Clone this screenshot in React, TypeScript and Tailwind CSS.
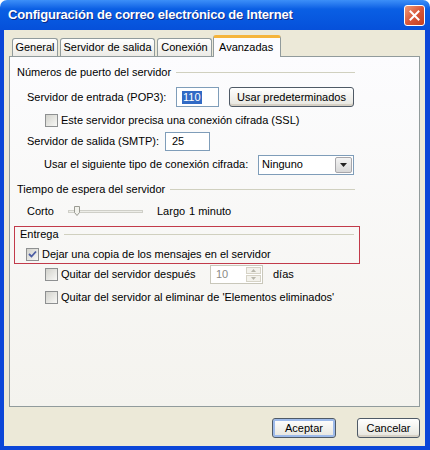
import React from 'react';

const font = "font-['Liberation_Sans',Arial,sans-serif]";

function CheckBox({ checked = false }: { checked?: boolean }) {
  return (
    <span className="w-[13px] h-[13px] shrink-0 border border-[#8E9091] bg-gradient-to-br from-[#D2D2CC] to-[#F8F8F6] flex items-center justify-center">
      {checked && (
        <svg width="9" height="9" viewBox="0 0 9 9">
          <path d="M1 4 L3.5 6.5 L8 1.5" fill="none" stroke="#4B5CA3" strokeWidth="1.8" />
        </svg>
      )}
    </span>
  );
}

function GroupHeader({ title }: { title: string }) {
  return (
    <div className="h-[14px] flex items-center pl-[3px] pr-[5px]">
      <span>{title}</span>
      <span className="flex-1 ml-[5px] h-px bg-[#D0D0BF]" />
    </div>
  );
}

function XpButton({ label, width, isDefault = false }: { label: string; width: string; isDefault?: boolean }) {
  return (
    <div
      className={`${width} h-[20px] rounded-[3px] border border-[#4F5A66] bg-gradient-to-b from-white to-[#E6E5DE] flex items-center justify-center ${
        isDefault ? 'shadow-[inset_0_0_0_2px_#9DBAEA]' : 'shadow-[inset_0_-2px_0_#D6D0C5]'
      }`}
    >
      {label}
    </div>
  );
}

function Tab({ label, width, selected = false }: { label: string; width: string; selected?: boolean }) {
  if (selected) {
    return (
      <div
        className={`${width} h-[22px] -mb-px -mx-[1px] relative z-10 rounded-t-[3px] border-x border-[#919B9C] border-t-[3px] border-t-[#F5B43B] bg-[#FCFCFE] flex items-center pl-[5px] pb-[1px]`}
      >
        {label}
      </div>
    );
  }
  return (
    <div
      className={`${width} h-[18px] rounded-t-[3px] border border-b-0 border-[#919B9C] bg-gradient-to-b from-white to-[#ECEBE6] flex items-center justify-center`}
    >
      {label}
    </div>
  );
}

export default function App() {
  return (
    <div className={`w-[430px] h-[450px] flex flex-col text-[11px] text-black ${font}`}>
      {/* Title bar */}
      <div className="h-[30px] shrink-0 rounded-t-[7px] bg-gradient-to-b from-[#3C8FF8] via-[#0A5FE4] via-30% to-[#0650DA] flex items-center pl-[8px] pr-[5px]">
        <span className="flex-1 text-white font-bold text-[13px] tracking-[-0.2px] [text-shadow:1px_1px_0_#0A2A8A]">
          Configuración de correo electrónico de Internet
        </span>
        <div className="w-[21px] h-[21px] rounded-[3px] border border-white bg-gradient-to-br from-[#EE9A78] via-[#D8573A] to-[#C2401F] flex items-center justify-center">
          <svg width="11" height="11" viewBox="0 0 11 11">
            <path d="M1.5 1.5 L9.5 9.5 M9.5 1.5 L1.5 9.5" stroke="white" strokeWidth="2" strokeLinecap="square" />
          </svg>
        </div>
      </div>

      {/* Window body */}
      <div className="flex-1 flex flex-col bg-[#ECE9D8] border-l-4 border-r-[5px] border-b-4 border-[#0B46D8] pl-[5px] pr-[5px]">
        {/* Tabs */}
        <div className="h-[26px] flex items-end pl-[3px] gap-[2px]">
          <Tab label="General" width="w-[46px]" />
          <Tab label="Servidor de salida" width="w-[95px]" />
          <Tab label="Conexión" width="w-[55px]" />
          <Tab label="Avanzadas" width="w-[68px]" selected />
        </div>

        {/* Tab page */}
        <div className="h-[351px] border border-[#919B9C] bg-gradient-to-b from-[#FCFCFE] to-[#F4F3EE] pl-[4px] pt-[8px]">
          <div className="w-[346px] flex flex-col">
            <GroupHeader title="Números de puerto del servidor" />

            <div className="mt-[8px] h-[20px] flex items-center pl-[13px]">
              <span className="w-[149px]">Servidor de entrada (POP3):</span>
              <div className="w-[43px] h-[20px] border border-[#7F9DB9] bg-white flex items-center pl-[5px]">
                <span className="bg-[#316AC5] text-white px-[1px] leading-[13px]">110</span>
              </div>
              <div className="ml-[10px]">
                <XpButton label="Usar predeterminados" width="w-[125px]" />
              </div>
            </div>

            <div className="mt-[6px] h-[14px] flex items-center pl-[31px] gap-[3px]">
              <CheckBox />
              <span>Este servidor precisa una conexión cifrada (SSL)</span>
            </div>

            <div className="mt-[5px] h-[19px] flex items-center pl-[13px]">
              <span className="w-[138px]">Servidor de salida (SMTP):</span>
              <div className="w-[45px] h-[19px] border border-[#7F9DB9] bg-white flex items-center pl-[6px]">25</div>
            </div>

            <div className="mt-[4px] h-[19px] flex items-center pl-[30px]">
              <span className="w-[214px]">Usar el siguiente tipo de conexión cifrada:</span>
              <div className="w-[96px] h-[20px] border border-[#7F9DB9] bg-white flex items-center pl-[3px] pr-[1px]">
                <span className="flex-1">Ninguno</span>
                <div className="w-[17px] h-[16px] border border-[#A7A6AA] rounded-[2px] bg-gradient-to-b from-[#F4F4F4] to-[#D8D8D8] flex items-center justify-center">
                  <svg width="7" height="4" viewBox="0 0 7 4">
                    <path d="M0 0 H7 L3.5 4 Z" fill="#222" />
                  </svg>
                </div>
              </div>
            </div>

            <div className="mt-[8px]">
              <GroupHeader title="Tiempo de espera del servidor" />
            </div>

            <div className="mt-[8px] h-[14px] flex items-center pl-[13px]">
              <span className="w-[41px]">Corto</span>
              <div className="w-[75px] h-[14px] relative flex items-center">
                <span className="w-full h-[3px] border border-[#CFCFC8] bg-[#EDEDE8]" />
                <svg className="absolute left-[6px] top-[2px]" width="6" height="10" viewBox="0 0 6 10">
                  <path d="M0.5 0.5 H5.5 V6.5 L3 9.5 L0.5 6.5 Z" fill="#F2F2EC" stroke="#9A9A93" />
                </svg>
              </div>
              <span className="ml-[14px] w-[32px]">Largo</span>
              <span>1 minuto</span>
            </div>

            {/* Delivery group */}
            <div className="mt-[8px] w-[346px] border border-[#C23A4A] flex flex-col">
              <div className="pl-[2px]">
                <GroupHeader title="Entrega" />
              </div>
              <div className="mt-[6px] mb-[2px] h-[14px] flex items-center pl-[11px] gap-[3px]">
                <CheckBox checked />
                <span>Dejar una copia de los mensajes en el servidor</span>
              </div>
            </div>

            <div className="mt-[1px] h-[19px] flex items-center pl-[31px]">
              <CheckBox />
              <span className="ml-[3px] w-[149px]">Quitar del servidor después</span>
              <div className="w-[53px] h-[19px] border border-[#C9C7BA] bg-white flex items-center pl-[5px] pr-[1px] text-[#8A8A85]">
                <span className="flex-1">10</span>
                <div className="w-[15px] h-[15px] flex flex-col gap-[1px]">
                  <div className="flex-1 border border-[#D6D3C6] bg-[#F3F2EC] flex items-center justify-center">
                    <svg width="5" height="3" viewBox="0 0 5 3"><path d="M0 3 H5 L2.5 0 Z" fill="#B9B7AC" /></svg>
                  </div>
                  <div className="flex-1 border border-[#D6D3C6] bg-[#F3F2EC] flex items-center justify-center">
                    <svg width="5" height="3" viewBox="0 0 5 3"><path d="M0 0 H5 L2.5 3 Z" fill="#B9B7AC" /></svg>
                  </div>
                </div>
              </div>
              <span className="ml-[10px]">días</span>
            </div>

            <div className="mt-[6px] h-[14px] flex items-center pl-[31px] gap-[3px]">
              <CheckBox />
              <span>Quitar del servidor al eliminar de 'Elementos eliminados'</span>
            </div>
          </div>
        </div>

        {/* Dialog buttons */}
        <div className="mt-[11px] flex justify-end gap-[21px]">
          <XpButton label="Aceptar" width="w-[64px]" isDefault />
          <XpButton label="Cancelar" width="w-[63px]" />
        </div>
      </div>
    </div>
  );
}
